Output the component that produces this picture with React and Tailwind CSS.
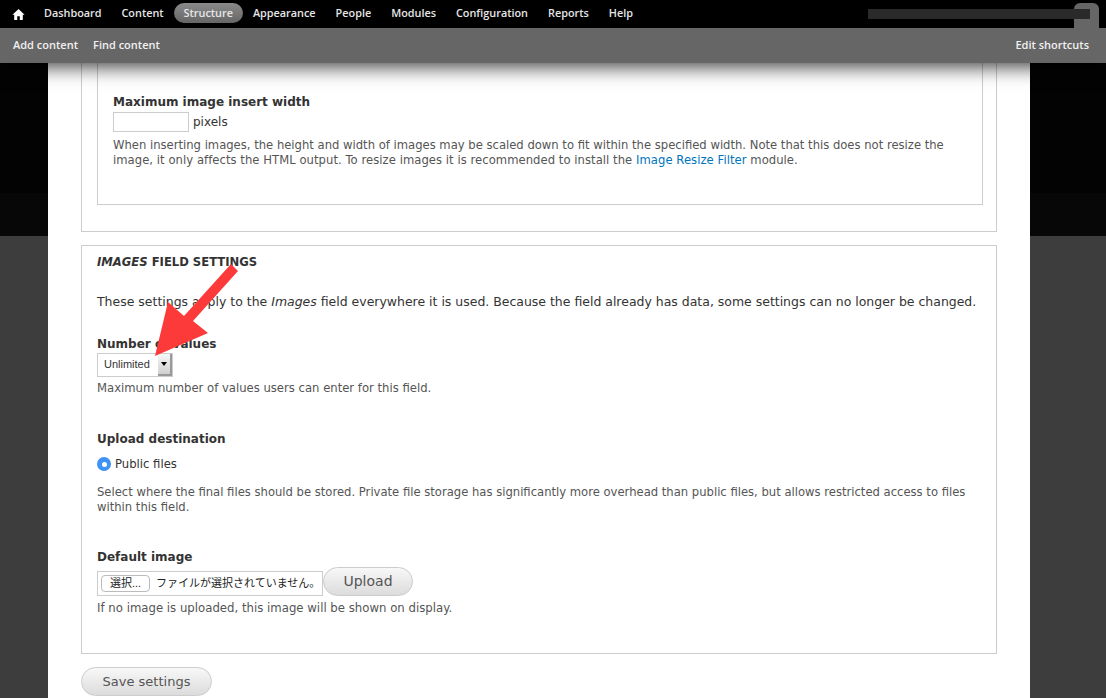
import React from "react";

function Toolbar() {
  const items = ["Dashboard", "Content", "Structure", "Appearance", "People", "Modules", "Configuration", "Reports", "Help"];
  return (
    <div className="relative z-10 shadow-[0_4px_18px_rgba(0,0,0,0.75)] font-['Open_Sans',sans-serif]">
      <div className="h-[28px] bg-black flex items-center pl-[12px] relative">
        <svg width="13" height="13" viewBox="0 0 13 13" className="mr-[9px]">
          <path d="M6.5 1 L12.6 6.8 L10.8 6.8 L10.8 12 L7.8 12 L7.8 8.2 L5.2 8.2 L5.2 12 L2.2 12 L2.2 6.8 L0.4 6.8 Z" fill="#fff" />
        </svg>
        <div className="flex items-center text-[10.85px] font-semibold text-[#e6e6e6] -mt-[2px]">
          {items.map((item) =>
            item === "Structure" ? (
              <span key={item} className="px-[10px] h-[20px] leading-[20px] rounded-[10px] bg-gradient-to-b from-[#8a8a8a] to-[#666]">
                {item}
              </span>
            ) : (
              <span key={item} className="px-[10px]">{item}</span>
            )
          )}
        </div>
        <div className="absolute right-[7px] top-[3px] w-[25px] h-[25px] rounded-t-[6px] bg-[#666]"></div>
        <div className="relative ml-auto mr-[16px] w-[222px] h-[10px] bg-[#2a2a2a]"></div>
      </div>
      <div className="h-[35px] bg-[#666] flex items-center justify-between px-[13px] text-[11px] font-semibold text-[#f0f0f0]">
        <div className="flex gap-[15px]">
          <span>Add content</span>
          <span>Find content</span>
        </div>
        <span className="pr-[4px]">Edit shortcuts</span>
      </div>
    </div>
  );
}

function SelectBox() {
  return (
    <div className="w-[76px] h-[24px] flex border border-[#ccc] bg-white">
      <span className="flex-1 pl-[6px] leading-[21px] text-[11px] text-[#333] font-['Liberation_Sans',sans-serif]">Unlimited</span>
      <span className="w-[14px] bg-gradient-to-b from-[#f7f7f7] to-[#d0d0d0] border-r-2 border-b-2 border-[#999] flex items-center justify-center">
        <span className="w-0 h-0 border-x-[3px] border-x-transparent border-t-[4px] border-t-black"></span>
      </span>
    </div>
  );
}

function App() {
  return (
    <div className="relative h-[698px] w-[1106px] overflow-hidden font-['DejaVu_Sans',sans-serif] bg-[linear-gradient(#030303_193px,#070707_193px,#070707_236px,#3d3d3d_236px)]">
      <Toolbar />
      <div className="ml-[48px] w-[982px] h-[635px] bg-white px-[33px] text-[11.63px] text-[#333]">
        <div className="h-[169px] border-x border-b border-[#ccc] pl-[15px] pr-[13px]">
          <div className="h-[142px] border-x border-b border-[#ccc] px-[15px] pt-[31px]">
            <div className="font-bold text-[12px] leading-[16px]">Maximum image insert width</div>
            <div className="flex items-center gap-[4px] mt-[2px] h-[20px] text-[12px]">
              <span className="w-[76px] h-[20px] border border-[#ccc] bg-white"></span>
              <span>pixels</span>
            </div>
            <p className="mt-[6px] leading-[15px] text-[#555] text-[11.6px] w-[850px]">
              When inserting images, the height and width of images may be scaled down to fit within the specified width. Note that this does not resize the <span className="tracking-[0.05px]">image, it only affects the HTML output. To resize images it is recommended to install the <a className="text-[#0074bd]">Image Resize Filter</a> module.</span>
            </p>
          </div>
        </div>

        <div className="mt-[13px] h-[409px] border border-[#ccc] pl-[15px] pr-[13px] pt-[8px]">
          <div className="font-bold text-[11.6px] leading-[16px] h-[16px]"><em>IMAGES</em> FIELD SETTINGS</div>
          <p className="mt-[24px] leading-[16px] text-[12.48px]">
            These settings apply to the <em>Images</em> field everywhere it is used. Because the field already has data, some settings can no longer be changed.
          </p>
          <div className="mt-[26px] font-bold text-[12px] leading-[16px]">Number of values</div>
          <div className="mt-[1px]"><SelectBox /></div>
          <p className="mt-[3px] leading-[16px] text-[#555]">Maximum number of values users can enter for this field.</p>

          <div className="mt-[35px] font-bold text-[12px] leading-[16px]">Upload destination</div>
          <div className="mt-[9px] flex items-center gap-[4px] h-[16px]">
            <span className="w-[14px] h-[14px] rounded-full bg-[#3f93f5] flex items-center justify-center">
              <span className="w-[5px] h-[5px] rounded-full bg-white"></span>
            </span>
            <span className="pt-[1px]">Public files</span>
          </div>
          <p className="mt-[13px] leading-[15px] text-[#555] text-[11.6px]">
            Select where the final files should be stored. Private file storage has significantly more overhead than public files, but allows restricted access to files within this field.
          </p>

          <div className="mt-[34px] font-bold text-[12px] leading-[16px]">Default image</div>
          <div className="mt-[5px] flex items-center">
            <div className="w-[226px] h-[25px] border border-[#ccc] flex items-center pl-[3px] gap-[6px] font-['Liberation_Sans','Noto_Sans_CJK_JP',sans-serif] text-[11px] text-[#222]">
              <span className="w-[49px] h-[17px] leading-[15px] text-center rounded-[4px] border border-[#bbb] bg-white">選択...</span>
              <span>ファイルが選択されていません。</span>
            </div>
            <span className="w-[90px] h-[29px] -mt-[3px] leading-[27px] text-center rounded-[15px] border border-[#ccc] bg-gradient-to-b from-[#f8f8f8] to-[#dcdcdc] text-[14px] text-[#555]">Upload</span>
          </div>
          <p className="mt-[4px] leading-[16px] text-[#555] text-[11.73px]">If no image is uploaded, this image will be shown on display.</p>
        </div>

        <div className="mt-[13px] w-[131px] h-[29px] leading-[28px] text-center rounded-[15px] border border-[#ccc] bg-gradient-to-b from-[#f8f8f8] to-[#dcdcdc] text-[13px] text-[#555]">Save settings</div>
      </div>

      <svg className="absolute left-[150px] top-[260px]" width="92" height="100" viewBox="0 0 92 100">
        <path d="M81 4 L88 11 L43 61 L58 73 L5 96 L18 42 L34 56 Z" fill="#fd3a3a" />
      </svg>
    </div>
  );
}

export default App;
